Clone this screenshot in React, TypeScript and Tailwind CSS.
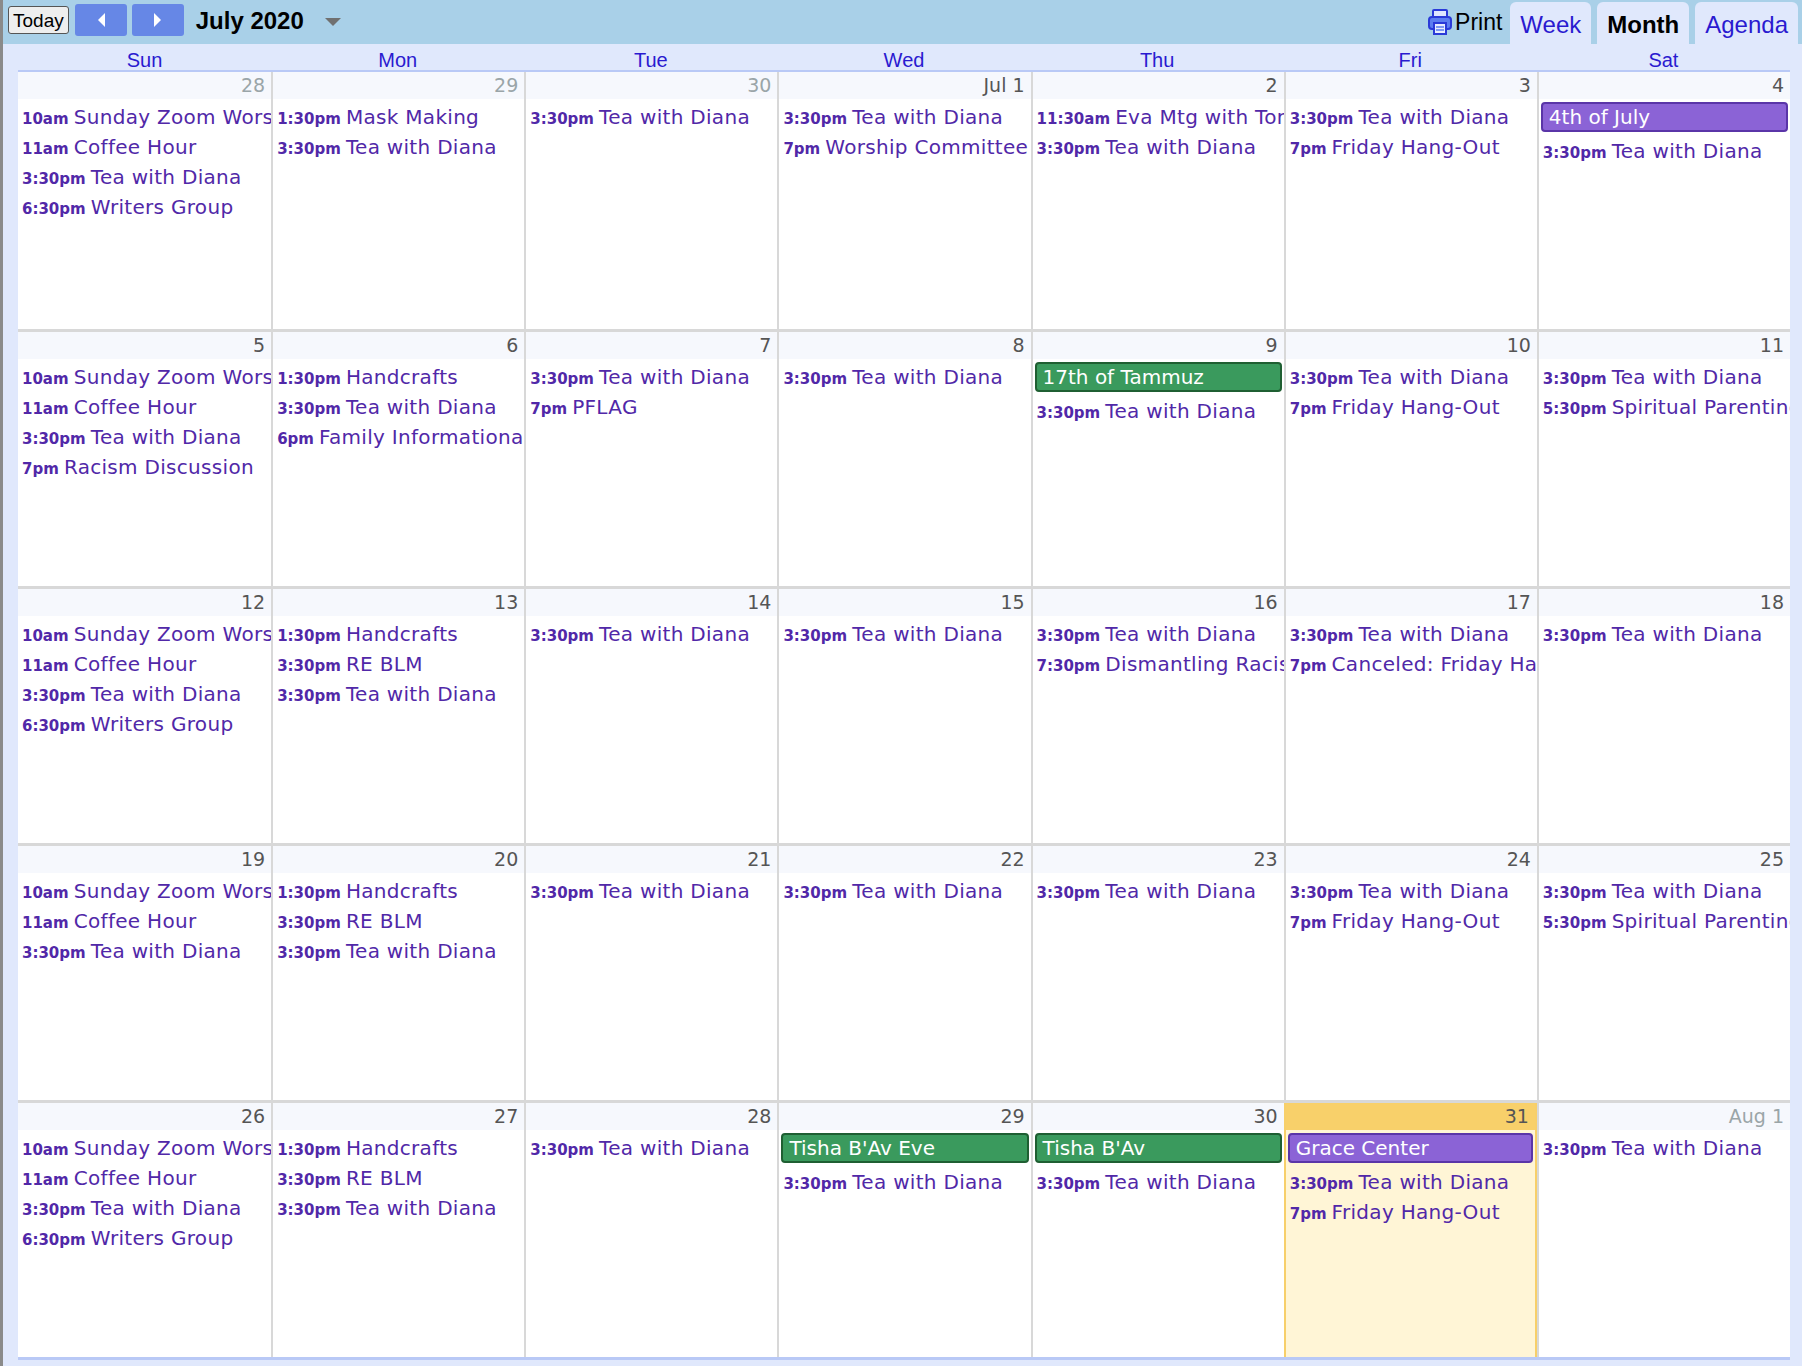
import React from 'react';

type Ev = { t?: string; n: string; allDay?: 'green' | 'purple' };
type Day = { label: string; muted?: boolean; today?: boolean; events: Ev[] };

const tea: Ev = { t: '3:30pm', n: 'Tea with Diana' };
const sun = (last: Ev): Ev[] => [
  { t: '10am', n: 'Sunday Zoom Worship' },
  { t: '11am', n: 'Coffee Hour' },
  tea,
  last,
];

const weeks: Day[][] = [
  [
    { label: '28', muted: true, events: sun({ t: '6:30pm', n: 'Writers Group' }) },
    { label: '29', muted: true, events: [{ t: '1:30pm', n: 'Mask Making' }, tea] },
    { label: '30', muted: true, events: [tea] },
    { label: 'Jul 1', events: [tea, { t: '7pm', n: 'Worship Committee' }] },
    { label: '2', events: [{ t: '11:30am', n: 'Eva Mtg with Tom' }, tea] },
    { label: '3', events: [tea, { t: '7pm', n: 'Friday Hang-Out' }] },
    { label: '4', events: [{ n: '4th of July', allDay: 'purple' }, tea] },
  ],
  [
    { label: '5', events: sun({ t: '7pm', n: 'Racism Discussion' }) },
    { label: '6', events: [{ t: '1:30pm', n: 'Handcrafts' }, tea, { t: '6pm', n: 'Family Informational' }] },
    { label: '7', events: [tea, { t: '7pm', n: 'PFLAG' }] },
    { label: '8', events: [tea] },
    { label: '9', events: [{ n: '17th of Tammuz', allDay: 'green' }, tea] },
    { label: '10', events: [tea, { t: '7pm', n: 'Friday Hang-Out' }] },
    { label: '11', events: [tea, { t: '5:30pm', n: 'Spiritual Parenting' }] },
  ],
  [
    { label: '12', events: sun({ t: '6:30pm', n: 'Writers Group' }) },
    { label: '13', events: [{ t: '1:30pm', n: 'Handcrafts' }, { t: '3:30pm', n: 'RE BLM' }, tea] },
    { label: '14', events: [tea] },
    { label: '15', events: [tea] },
    { label: '16', events: [tea, { t: '7:30pm', n: 'Dismantling Racism' }] },
    { label: '17', events: [tea, { t: '7pm', n: 'Canceled: Friday Hang-Out' }] },
    { label: '18', events: [tea] },
  ],
  [
    { label: '19', events: [{ t: '10am', n: 'Sunday Zoom Worship' }, { t: '11am', n: 'Coffee Hour' }, tea] },
    { label: '20', events: [{ t: '1:30pm', n: 'Handcrafts' }, { t: '3:30pm', n: 'RE BLM' }, tea] },
    { label: '21', events: [tea] },
    { label: '22', events: [tea] },
    { label: '23', events: [tea] },
    { label: '24', events: [tea, { t: '7pm', n: 'Friday Hang-Out' }] },
    { label: '25', events: [tea, { t: '5:30pm', n: 'Spiritual Parenting' }] },
  ],
  [
    { label: '26', events: sun({ t: '6:30pm', n: 'Writers Group' }) },
    { label: '27', events: [{ t: '1:30pm', n: 'Handcrafts' }, { t: '3:30pm', n: 'RE BLM' }, tea] },
    { label: '28', events: [tea] },
    { label: '29', events: [{ n: "Tisha B'Av Eve", allDay: 'green' }, tea] },
    { label: '30', events: [{ n: "Tisha B'Av", allDay: 'green' }, tea] },
    { label: '31', today: true, events: [{ n: 'Grace Center', allDay: 'purple' }, tea, { t: '7pm', n: 'Friday Hang-Out' }] },
    { label: 'Aug 1', muted: true, events: [tea] },
  ],
];

const days = ['Sun', 'Mon', 'Tue', 'Wed', 'Thu', 'Fri', 'Sat'];

function Event({ e }: { e: Ev }) {
  if (e.allDay) {
    const c =
      e.allDay === 'green'
        ? 'bg-[#3a9a5d] border-[#1f5f32]'
        : 'bg-[#8b63d6] border-[#5a35a8]';
    return (
      <div className={`mx-[2px] mt-[1px] mb-[3px] h-[30px] rounded-[4px] border-2 ${c} px-[6px] text-[20px] leading-[26px] text-white whitespace-nowrap overflow-hidden`}>
        {e.n}
      </div>
    );
  }
  return (
    <div className="h-[30px] pl-[4px] whitespace-nowrap overflow-hidden text-[#5128a8] leading-[32px]">
      <span className="text-[15px] font-bold">{e.t}</span>{' '}
      <span className="text-[20px] tracking-[0.3px]">{e.n}</span>
    </div>
  );
}

function Cell({ d }: { d: Day }) {
  return (
    <div
      className={`flex flex-col overflow-hidden border-l-2 first:border-l-0 ${
        d.today ? 'bg-[#fff5d6] border-x-2 border-[#f7cf6a]' : 'bg-white border-[#d8d8d8]'
      }`}
    >
      <div
        className={`h-[27px] pr-[6px] text-right text-[19px] leading-[27px] ${
          d.today ? 'bg-[#f8d06a] text-[#444]' : 'bg-[#f6f8fd]'
        } ${d.muted ? 'text-[#9aa5a8]' : 'text-[#555]'}`}
      >
        {d.label}
      </div>
      <div className="pt-[2px]">
        {d.events.map((e, i) => (
          <Event key={i} e={e} />
        ))}
      </div>
    </div>
  );
}

export default function App() {
  return (
    <div
      className="w-[1802px] h-[1366px] bg-[#e0e8fc] border-l-[3px] border-[#8a8a8a] flex flex-col"
      style={{ fontFamily: '"DejaVu Sans", Verdana, sans-serif' }}
    >
      <div className="h-[44px] bg-[#a9d0e8] flex items-center pl-[5px] pr-[4px] shrink-0" style={{ fontFamily: '"Liberation Sans", Arial, sans-serif' }}>
        <button className="h-[28px] px-[4px] mb-[4px] rounded-[3px] border border-[#555] bg-[#eeeeee] text-[19px] leading-none">
          Today
        </button>
        <div className="ml-[6px] mb-[4px] flex gap-[5px]">
          <div className="w-[52px] h-[32px] rounded-[3px] bg-[#6687e6] flex items-center justify-center">
            <svg width="10" height="16" viewBox="0 0 10 16"><path d="M9 1 L2 8 L9 15 Z" fill="white" /></svg>
          </div>
          <div className="w-[52px] h-[32px] rounded-[3px] bg-[#6687e6] flex items-center justify-center">
            <svg width="10" height="16" viewBox="0 0 10 16"><path d="M1 1 L8 8 L1 15 Z" fill="white" /></svg>
          </div>
        </div>
        <div className="ml-[12px] mb-[2px] text-[24px] font-bold text-black">July 2020</div>
        <svg className="ml-[20px]" width="18" height="10" viewBox="0 0 18 10"><path d="M1 1 H17 L9 9 Z" fill="#707070" /></svg>
        <div className="flex-1" />
        <div className="flex items-center gap-[2px] mr-[8px] text-[23px] text-black">
          <svg width="26" height="28" viewBox="0 0 26 28">
            <rect x="6" y="2" width="14" height="8" rx="1" fill="#dfe6ff" stroke="#2a3ad8" strokeWidth="2" />
            <rect x="2" y="9" width="22" height="12" rx="3" fill="#5c7df0" stroke="#2a3ad8" strokeWidth="2" />
            <rect x="7" y="15" width="12" height="11" fill="#e8ecff" stroke="#2a3ad8" strokeWidth="2" />
            <path d="M9 19 H17 M9 22 H17" stroke="#5c7df0" strokeWidth="1.5" />
          </svg>
          Print
        </div>
        <div className="flex gap-[6px] self-end">
          <div className="h-[42px] px-[10px] rounded-t-[6px] bg-[#e0e8fc] text-[24px] leading-[46px] text-[#2a1ad0]">Week</div>
          <div className="h-[42px] px-[10px] rounded-t-[6px] bg-[#e0e8fc] text-[24px] leading-[46px] font-bold text-black">Month</div>
          <div className="h-[42px] px-[10px] rounded-t-[6px] bg-[#e0e8fc] text-[24px] leading-[46px] text-[#2a1ad0]">Agenda</div>
        </div>
      </div>
      <div className="ml-[15px] mr-[12px] flex flex-col flex-1">
        <div className="grid grid-cols-7 h-[28px] border-b-2 border-[#b9c9f6]" style={{ fontFamily: '"Liberation Sans", Arial, sans-serif' }}>
          {days.map((d) => (
            <div key={d} className="text-center text-[20px] leading-[32px] text-[#2a1ad0]">{d}</div>
          ))}
        </div>
        <div className="flex flex-col border-b-[3px] border-[#b9c9f6]">
          {weeks.map((w, i) => (
            <div key={i} className="grid grid-cols-7 h-[257px] border-t-[3px] first:border-t-0 border-[#d8d8d8]">
              {w.map((d, j) => (
                <Cell key={j} d={d} />
              ))}
            </div>
          ))}
        </div>
      </div>
    </div>
  );
}
